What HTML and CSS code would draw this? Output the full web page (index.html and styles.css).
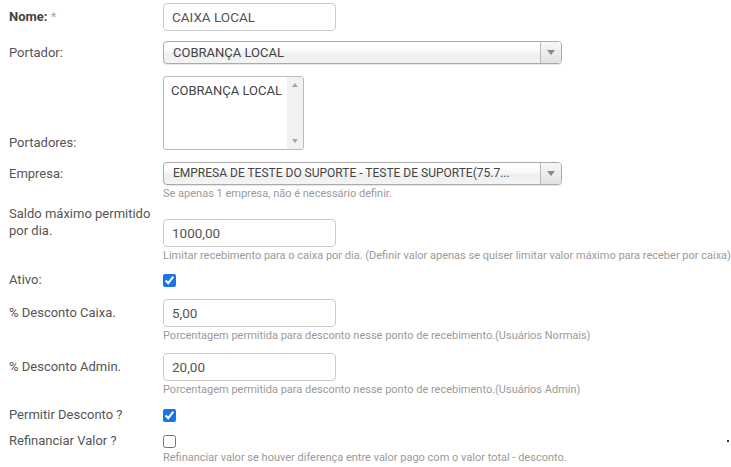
FILE: index.html
```html
<!DOCTYPE html>
<html lang="pt-BR">
<head>
<meta charset="utf-8">
<title>Caixa</title>
<link rel="stylesheet" href="styles.css">
</head>
<body>
<form class="form">
  <div class="row r-nome">
    <label class="lbl lbl-strong">Nome: <span class="req">*</span></label>
    <div class="ctl"><input class="text" type="text" value="CAIXA LOCAL"></div>
  </div>

  <div class="row r-portador">
    <label class="lbl">Portador:</label>
    <div class="ctl">
      <div class="sel"><span class="sel-text">COBRANÇA LOCAL</span><span class="sel-arrow"><i class="tri"></i></span></div>
    </div>
  </div>

  <div class="row r-portadores">
    <label class="lbl lbl-bottom">Portadores:</label>
    <div class="ctl">
      <div class="listbox">
        <div class="options"><div class="opt">COBRANÇA LOCAL</div></div>
        <div class="scroll"><i class="tri-up"></i><i class="tri-down"></i></div>
      </div>
    </div>
  </div>

  <div class="row r-empresa">
    <label class="lbl">Empresa:</label>
    <div class="ctl">
      <div class="sel"><span class="sel-text sel-text-long">EMPRESA DE TESTE DO SUPORTE - TESTE DE SUPORTE(75.7...</span><span class="sel-arrow"><i class="tri"></i></span></div>
    </div>
    <div class="help">Se apenas 1 empresa, não é necessário definir.</div>
  </div>

  <div class="row r-saldo">
    <label class="lbl lbl-top">Saldo máximo permitido por dia.</label>
    <div class="ctl"><input class="text" type="text" value="1000,00"></div>
    <div class="help">Limitar recebimento para o caixa por dia. (Definir valor apenas se quiser limitar valor máximo para receber por caixa)</div>
  </div>

  <div class="row r-ativo">
    <label class="lbl">Ativo:</label>
    <div class="ctl"><input class="check" type="checkbox" checked></div>
  </div>

  <div class="row r-caixa">
    <label class="lbl">% Desconto Caixa.</label>
    <div class="ctl"><input class="text" type="text" value="5,00"></div>
    <div class="help">Porcentagem permitida para desconto nesse ponto de recebimento.(Usuários Normais)</div>
  </div>

  <div class="row r-admin">
    <label class="lbl">% Desconto Admin.</label>
    <div class="ctl"><input class="text" type="text" value="20,00"></div>
    <div class="help">Porcentagem permitida para desconto nesse ponto de recebimento.(Usuários Admin)</div>
  </div>

  <div class="row r-permitir">
    <label class="lbl">Permitir Desconto ?</label>
    <div class="ctl"><input class="check" type="checkbox" checked></div>
  </div>

  <div class="row r-refin">
    <label class="lbl">Refinanciar Valor ?</label>
    <div class="ctl"><input class="check" type="checkbox"><span class="dot"></span></div>
    <div class="help">Refinanciar valor se houver diferença entre valor pago com o valor total - desconto.</div>
  </div>
</form>
</body>
</html>
```

FILE: styles.css
```css
html, body {
  margin: 0;
  padding: 0;
  background: #fff;
}

body {
  font-family: Roboto, "Liberation Sans", sans-serif;
  font-size: 13px;
  color: #555;
}

.form {
  padding: 3px 2px 0 9px;
}

.row {
  display: grid;
  grid-template-columns: 154px 1fr;
  grid-template-areas:
    "l c"
    ". h";
  align-items: center;
}

.lbl {
  grid-area: l;
  line-height: 16px;
  color: #555;
}

.lbl-strong {
  font-weight: bold;
  color: #444;
}

.req {
  font-weight: normal;
  color: #aaa;
}

.lbl-bottom {
  align-self: end;
  margin-bottom: -1px;
}

.lbl-top {
  align-self: start;
  line-height: 17px;
}

.ctl {
  grid-area: c;
  display: flex;
  align-items: center;
}

.help {
  grid-area: h;
  margin-top: 2px;
  font-size: 11px;
  line-height: 13px;
  color: #9a9a9a;
  white-space: nowrap;
}

/* row spacing */
.r-nome { margin-bottom: 10px; }
.r-portador { margin-bottom: 12px; }
.r-portadores { margin-bottom: 12px; }
.r-empresa { margin-bottom: 5px; }
.r-saldo { margin-bottom: 10px; }
.r-saldo .ctl { align-self: start; margin-top: 14px; }
.r-ativo { margin-bottom: 11px; }
.r-caixa { margin-bottom: 11px; }
.r-admin { margin-bottom: 11px; }
.r-permitir { margin-bottom: 10px; }

/* text inputs */
.text {
  box-sizing: border-box;
  width: 173px;
  height: 28px;
  margin: 0;
  padding: 0 8px;
  border: 1px solid #ccc;
  border-radius: 4px;
  font-family: Roboto, "Liberation Sans", sans-serif;
  font-size: 13.5px;
  color: #555;
  background: #fff;
  outline: none;
}

/* chosen-like select */
.sel {
  box-sizing: border-box;
  width: 399px;
  height: 23px;
  display: flex;
  align-items: stretch;
  border: 1px solid #aaa;
  border-radius: 4px;
  background: linear-gradient(#fff 20%, #f6f6f6 50%, #eee 52%, #f4f4f4 100%);
  box-shadow: 0 1px 1px rgba(0, 0, 0, 0.1);
  color: #444;
  overflow: hidden;
}

.sel-text {
  flex: 1;
  min-width: 0;
  padding-left: 9px;
  line-height: 21px;
  white-space: nowrap;
  overflow: hidden;
}

.sel-text-long {
  font-size: 12px;
}

.sel-arrow {
  flex: 0 0 20px;
  display: flex;
  align-items: center;
  justify-content: center;
  border-left: 1px solid #bbb;
  background: linear-gradient(#f8f8f8, #e2e2e2);
}

.tri {
  width: 0;
  height: 0;
  border-left: 4px solid transparent;
  border-right: 4px solid transparent;
  border-top: 5px solid #888;
}

/* listbox */
.listbox {
  box-sizing: border-box;
  width: 141px;
  height: 74px;
  display: flex;
  border: 1px solid #bbb;
  border-radius: 3px;
  background: #fff;
  overflow: hidden;
}

.options {
  flex: 1;
  padding: 6px 0 0 7px;
}

.opt {
  line-height: 16px;
  color: #444;
  white-space: nowrap;
}

.scroll {
  flex: 0 0 16px;
  display: flex;
  flex-direction: column;
  justify-content: space-between;
  align-items: center;
  padding: 6px 0 6px;
  background: #f1f1f1;
}

.tri-up {
  width: 0;
  height: 0;
  border-left: 3.5px solid transparent;
  border-right: 3.5px solid transparent;
  border-bottom: 4px solid #a3a3a3;
}

.tri-down {
  width: 0;
  height: 0;
  border-left: 3.5px solid transparent;
  border-right: 3.5px solid transparent;
  border-top: 4px solid #a3a3a3;
}

/* checkboxes */
.check {
  width: 13px;
  height: 13px;
  margin: 0;
  accent-color: #1a73e8;
}

.dot {
  margin-left: auto;
  width: 2px;
  height: 2px;
  background: #333;
}
```
